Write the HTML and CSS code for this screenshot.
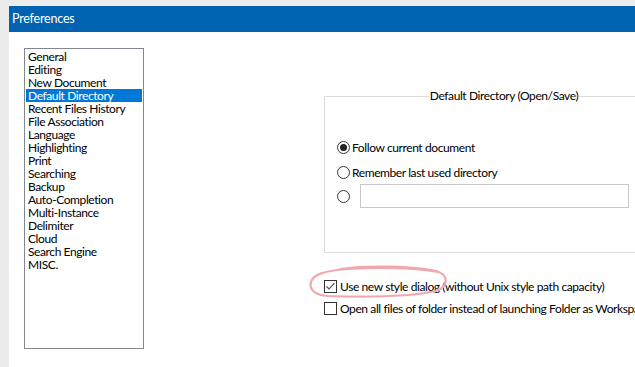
FILE: index.html
```html
<!DOCTYPE html>
<html lang="en">
<head>
<meta charset="UTF-8">
<title>Preferences</title>
<link rel="stylesheet" href="styles.css">
</head>
<body>
  <div class="window">
    <div class="titlebar">Preferences</div>
    <div class="content">
      <ul class="listbox">
        <li>General</li>
        <li>Editing</li>
        <li>New Document</li>
        <li class="selected">Default Directory</li>
        <li>Recent Files History</li>
        <li>File Association</li>
        <li>Language</li>
        <li>Highlighting</li>
        <li>Print</li>
        <li>Searching</li>
        <li>Backup</li>
        <li>Auto-Completion</li>
        <li>Multi-Instance</li>
        <li>Delimiter</li>
        <li>Cloud</li>
        <li>Search Engine</li>
        <li>MISC.</li>
      </ul>

      <div class="pane">
        <fieldset class="group">
          <legend>Default Directory (Open/Save)</legend>
          <div class="radio-row first">
            <span class="radio checked"></span>
            <span class="label">Follow current document</span>
          </div>
          <div class="radio-row">
            <span class="radio"></span>
            <span class="label">Remember last used directory</span>
          </div>
          <div class="radio-row path">
            <span class="radio"></span>
            <span class="textbox"></span>
          </div>
        </fieldset>

        <div class="checks">
          <div class="check-row">
            <span class="checkbox">
              <svg width="13" height="13" viewBox="0 0 13 13"><path d="M2.5 6.5 L5 9 L10.5 3.2" fill="none" stroke="#555" stroke-width="1.2"/></svg>
            </span>
            <span class="label">Use new style dialog (without Unix style path capacity)</span>
          </div>
          <div class="check-row">
            <span class="checkbox"></span>
            <span class="label">Open all files of folder instead of launching Folder as Workspace on folder dropping</span>
          </div>
          <svg class="scribble" width="150" height="40" viewBox="0 0 150 40">
            <path d="M32 6 C60 2 105 3 128 8 C142 12 140 24 128 28 C100 34 50 34 20 33 C6 32 1 26 3 19 C5 12 14 8 40 6 C70 4 110 5 130 9" fill="none" stroke="#f2a7ae" stroke-width="2.2" stroke-linecap="round"/>
          </svg>
        </div>
      </div>
    </div>
  </div>
</body>
</html>
```

FILE: styles.css
```css
html, body {
  margin: 0;
  height: 100%;
  overflow: hidden;
}
body {
  background: #ececec;
  font-family: 'Lato', 'Noto Sans', sans-serif;
  font-size: 12px;
  letter-spacing: -0.4px;
  color: #000;
}
.window {
  margin: 6px 0 0 9px;
  width: 700px;
  height: 400px;
  background: #fff;
}
.titlebar {
  height: 26px;
  line-height: 26px;
  background: #0063b1;
  color: #fff;
  font-size: 12.5px;
  letter-spacing: -0.2px;
  padding-left: 3px;
}
.content {
  display: flex;
  padding: 16px 0 0 15px;
}
.listbox {
  flex: none;
  list-style: none;
  margin: 0;
  padding: 1px;
  width: 116px;
  height: 297px;
  border: 1px solid #828790;
}
.listbox li {
  height: 13px;
  line-height: 13px;
  padding-left: 2px;
  white-space: nowrap;
}
.listbox li.selected {
  background: #0078d7;
  color: #fff;
}
.pane {
  flex: none;
  margin-left: 180px;
  padding-top: 41px;
}
.group {
  margin: 0;
  width: 348px;
  height: 164px;
  padding: 0 0 0 12px;
  border: 1px solid #dcdcdc;
  box-sizing: border-box;
}
.group legend {
  margin: 0 auto;
  padding: 0 1px;
  line-height: 14px;
}
.radio-row {
  display: flex;
  align-items: center;
  gap: 2px;
  height: 24px;
}
.radio-row.first {
  margin-top: 32px;
  margin-bottom: 1px;
}
.radio {
  width: 11px;
  height: 11px;
  border: 1px solid #333;
  border-radius: 50%;
  position: relative;
  flex: none;
}
.radio.checked::after {
  content: '';
  position: absolute;
  left: 2px;
  top: 2px;
  width: 7px;
  height: 7px;
  border-radius: 50%;
  background: #222;
}
.radio-row.path {
  gap: 10px;
}
.textbox {
  width: 267px;
  height: 22px;
  border: 1px solid #c8c8c8;
}
.checks {
  position: relative;
  padding-top: 22px;
}
.check-row {
  display: flex;
  align-items: center;
  gap: 3px;
  height: 22px;
  white-space: nowrap;
}
.checkbox {
  width: 11px;
  height: 11px;
  border: 1px solid #333;
  flex: none;
  position: relative;
}
.checkbox svg {
  position: absolute;
  left: -1px;
  top: -1px;
}
.scribble {
  position: absolute;
  left: -16px;
  top: 10px;
}
```
